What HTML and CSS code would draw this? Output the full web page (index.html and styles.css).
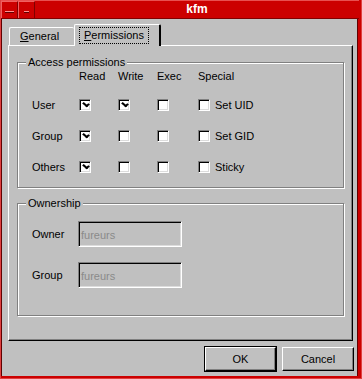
FILE: index.html
```html
<!DOCTYPE html>
<html lang="en">
<head>
  <meta charset="UTF-8">
  <title>kfm</title>
  <link rel="stylesheet" href="styles.css">
</head>
<body>
  <div class="window">
    <div class="titlebar">
      <span class="tbtn"><span class="bar wide"></span></span>
      <span class="tbtn"><span class="bar"></span></span>
      <span class="title">kfm</span>
    </div>

    <div class="client">
      <div class="tabs">
        <div class="tab"><u>G</u>eneral</div>
        <div class="tab active"><span class="focus"><u>P</u>ermissions</span></div>
      </div>

      <div class="panel">
        <fieldset class="group access">
          <legend>Access permissions</legend>
          <div class="perm-grid">
            <span></span>
            <span>Read</span>
            <span>Write</span>
            <span>Exec</span>
            <span>Special</span>

            <span>User</span>
            <span class="check on"></span>
            <span class="check on"></span>
            <span class="check"></span>
            <span class="special"><span class="check"></span>Set UID</span>

            <span>Group</span>
            <span class="check on"></span>
            <span class="check"></span>
            <span class="check"></span>
            <span class="special"><span class="check"></span>Set GID</span>

            <span>Others</span>
            <span class="check on"></span>
            <span class="check"></span>
            <span class="check"></span>
            <span class="special"><span class="check"></span>Sticky</span>
          </div>
        </fieldset>

        <fieldset class="group owner">
          <legend>Ownership</legend>
          <div class="owner-grid">
            <span>Owner</span>
            <span class="field">fureurs</span>
            <span>Group</span>
            <span class="field">fureurs</span>
          </div>
        </fieldset>
      </div>

      <div class="buttons">
        <button class="default">OK</button>
        <button>Cancel</button>
      </div>
    </div>
  </div>
</body>
</html>
```

FILE: styles.css
```css
body {
  margin: 0;
  font-family: 'Liberation Sans', Arial, sans-serif;
  font-size: 11px;
  color: #000;
  background: #c0c0c0;
}

.window {
  width: 362px;
  height: 379px;
  box-sizing: border-box;
  display: flex;
  flex-direction: column;
  background: #cc0000;
  border-left: 1px solid #e04040;
  border-right: 1px solid #e04040;
  border-bottom: 1px solid #e04040;
  padding: 0 3px 2px 0;
}

.titlebar {
  height: 17px;
  display: flex;
  align-items: stretch;
  border-top: 1px solid #e85050;
  border-bottom: 1px solid #800000;
  margin-right: -1px;
}

.tbtn {
  width: 15px;
  border-left: 1px solid #f06060;
  border-top: 1px solid #f06060;
  border-right: 1px solid #800000;
  display: flex;
  align-items: center;
  justify-content: center;
  padding-top: 3px;
}

.bar {
  width: 5px;
  height: 1px;
  background: #ff9090;
  border-bottom: 1px solid #600000;
}

.bar.wide {
  width: 9px;
}

.title {
  flex: 1;
  text-align: center;
  color: #fff;
  font-weight: bold;
  font-size: 12px;
  line-height: 16px;
}

.client {
  flex: 1;
  min-height: 0;
  display: flex;
  flex-direction: column;
  background: #c0c0c0;
  border-left: 1px solid #600000;
  border-right: 1px solid #600000;
  padding: 5px 3px 5px 6px;
}

.tabs {
  display: flex;
  align-items: flex-end;
  height: 21px;
  flex-shrink: 0;
  padding-left: 1px;
}

.tab {
  height: 17px;
  width: 54px;
  padding-left: 10px;
  line-height: 17px;
  border-top: 1px solid #fff;
  border-left: 1px solid #fff;
  border-radius: 2px 2px 0 0;
}

.tab.active {
  position: relative;
  z-index: 1;
  width: 79px;
  height: 21px;
  padding-left: 5px;
  margin-bottom: -1px;
  background: #c0c0c0;
  border-right: 2px solid #000;
  display: flex;
  align-items: center;
}

.focus {
  outline: 1px dotted #000;
  padding: 1px 4px;
  line-height: 13px;
}

.panel {
  height: 284px;
  flex-shrink: 0;
  margin-right: 1px;
  border-top: 1px solid #fff;
  border-left: 1px solid #fff;
  border-right: 1px solid #000;
  border-bottom: 1px solid #000;
  box-shadow: inset -1px -1px 0 #808080;
  padding: 10px 8px 0 8px;
}

.group {
  margin: 0;
  padding: 0 0 0 14px;
  border: 1px solid #808080;
  box-shadow: inset 1px 1px 0 #fff, 1px 1px 0 #fff;
}

.group legend {
  padding: 0 2px;
  margin-left: -6px;
  background: #c0c0c0;
  line-height: 13px;
}

.access {
  height: 130px;
}

.owner {
  margin-top: 9px;
  height: 117px;
}

.perm-grid {
  display: grid;
  grid-template-columns: 47px 39px 39px 41px 1fr;
  grid-template-rows: 20px 31px 31px 31px;
  align-items: center;
}

.perm-grid > span:nth-child(-n+5) {
  align-self: start;
  padding-top: 1px;
}

.check {
  width: 10px;
  height: 10px;
  background: #fff;
  border-top: 1px solid #808080;
  border-left: 1px solid #808080;
  border-right: 1px solid #fff;
  border-bottom: 1px solid #fff;
  box-shadow: inset 1px 1px 0 #000, inset -1px -1px 0 #dcdcdc;
  position: relative;
}

.check.on::after {
  content: "";
  position: absolute;
  left: 3px;
  top: 2px;
  width: 4px;
  height: 2px;
  border-right: 2px solid #000;
  border-bottom: 2px solid #000;
  transform: rotate(40deg) skewX(-10deg);
  transform-origin: center;
}

.special {
  display: flex;
  align-items: center;
  gap: 5px;
}

.owner-grid {
  display: grid;
  grid-template-columns: 46px 104px;
  grid-auto-rows: 26px;
  row-gap: 15px;
  align-items: center;
  padding-top: 11px;
}

.field {
  box-sizing: border-box;
  height: 26px;
  line-height: 22px;
  padding: 2px 0 0 2px;
  color: #8a8a8a;
  border-top: 1px solid #808080;
  border-left: 1px solid #808080;
  border-right: 1px solid #fff;
  border-bottom: 1px solid #fff;
  box-shadow: inset 1px 1px 0 #000, inset -1px -1px 0 #dcdcdc;
}

.buttons {
  display: flex;
  justify-content: flex-end;
  gap: 6px;
  margin-top: auto;
}

button {
  font-family: 'Liberation Sans', Arial, sans-serif;
  font-size: 11px;
  color: #000;
  background: #c0c0c0;
  width: 72px;
  height: 24px;
  padding: 0;
  border-top: 1px solid #fff;
  border-left: 1px solid #fff;
  border-right: 1px solid #000;
  border-bottom: 1px solid #000;
  box-shadow: inset -1px -1px 0 #808080;
}

button.default {
  width: 71px;
  outline: 1px solid #000;
  outline-offset: 0;
}
```
